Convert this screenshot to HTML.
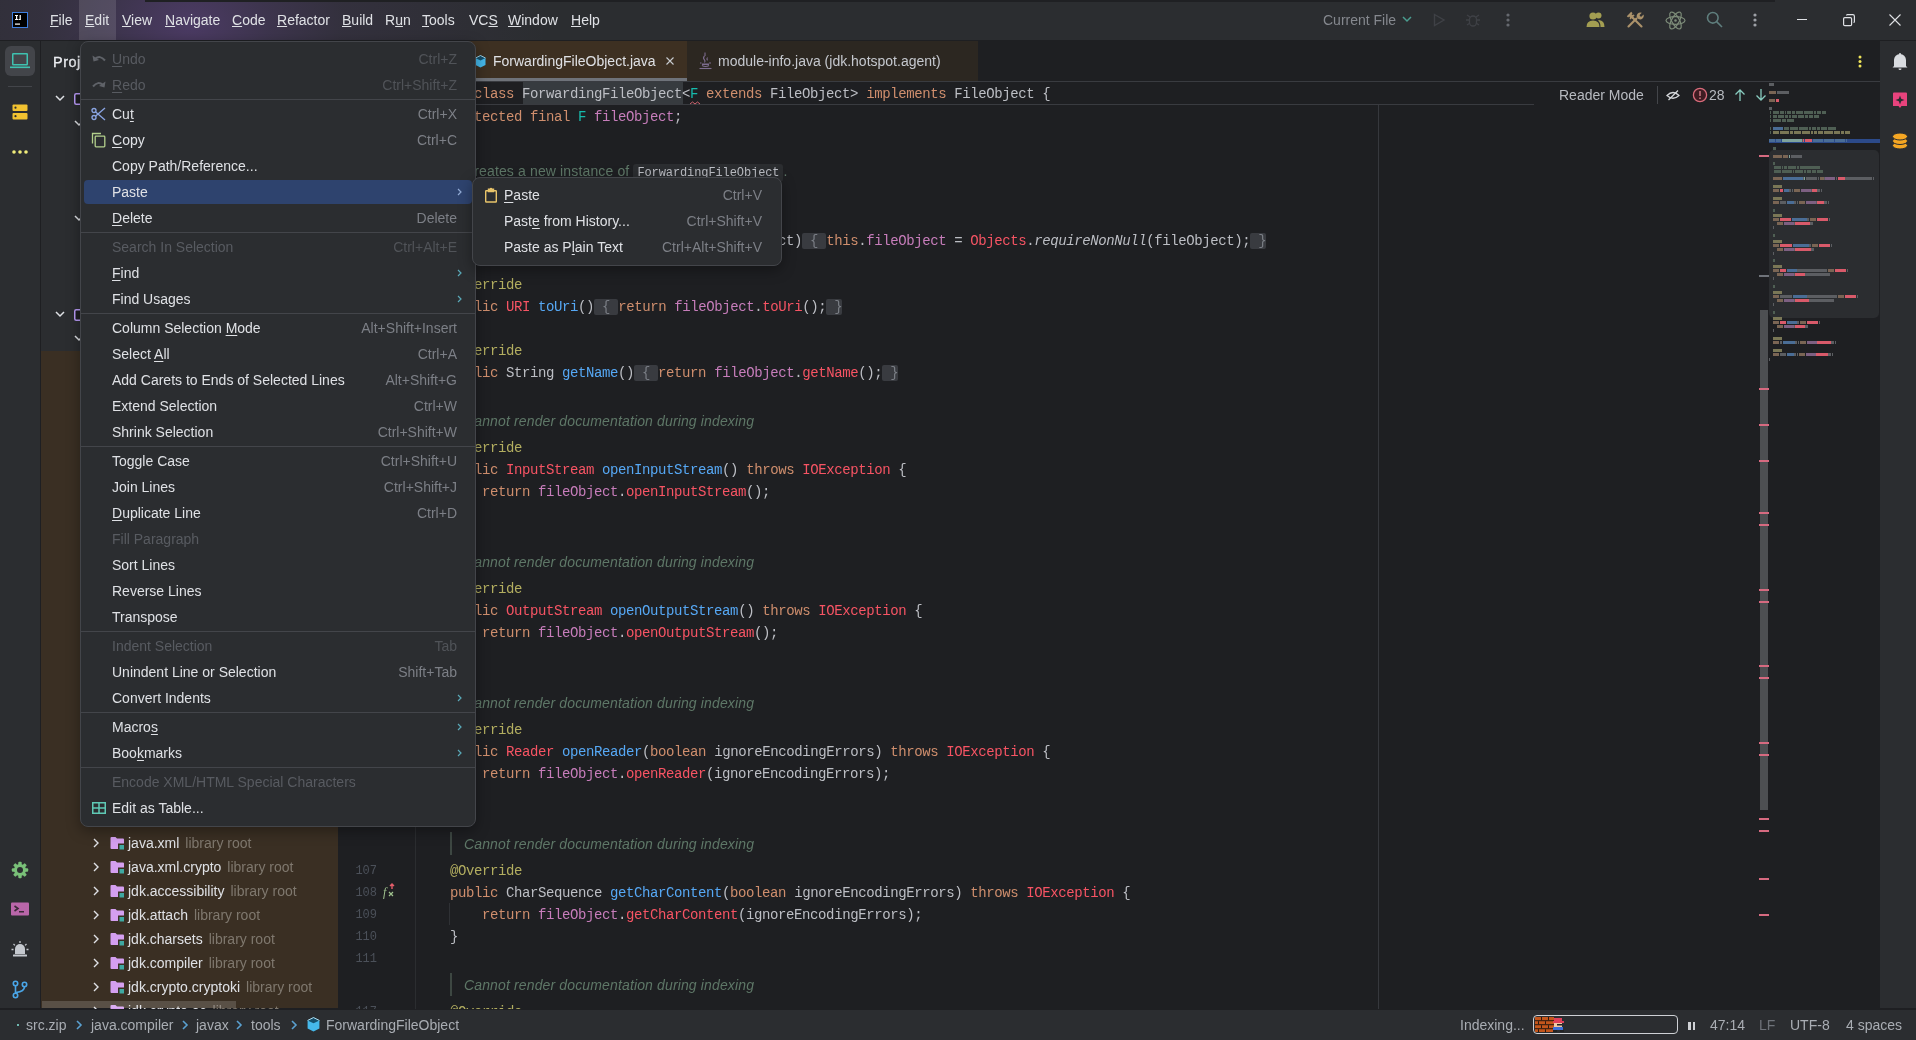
<!DOCTYPE html><html><head><meta charset="utf-8"><style>
*{margin:0;padding:0;box-sizing:border-box}
html,body{width:1916px;height:1040px;overflow:hidden;background:#1e1f22;font-family:"Liberation Sans",sans-serif;font-size:14px;color:#dfe1e5}
.a{position:absolute}
.mono{font-family:"Liberation Mono",monospace}
.u{text-decoration:underline;text-underline-offset:1px}

.code{position:absolute;left:418px;white-space:pre;font-family:"Liberation Mono",monospace;font-size:14px;letter-spacing:-0.4px;line-height:22px;color:#bcbec4}
.k{color:#cf8e6d}.an{color:#b3ae60}.md{color:#56a8f5}.er{color:#f75464}.fd{color:#c77dbb}.tp{color:#16baac}.it{font-style:italic}
.fo{background:#393b40;color:#7a7e85;border-radius:2px}
.doc{position:absolute;left:464px;white-space:pre;font-family:"Liberation Sans",sans-serif;font-style:italic;font-size:14px;letter-spacing:0.14px;line-height:18px;color:#5e7767}
.ln{position:absolute;left:348px;width:29px;text-align:right;font-family:"Liberation Mono",monospace;font-size:12px;line-height:16px;color:#4b5059}

.mi{position:absolute;white-space:pre;font-size:14px;line-height:26px;height:26px}
.ms{position:absolute;white-space:pre;font-size:14px;line-height:26px;height:26px;text-align:right;color:#7c7f86}
.u1{text-decoration:underline;text-decoration-thickness:1px;text-underline-offset:2px}
</style></head><body><div style="position:absolute;left:0;top:0;width:1916px;height:1040px;overflow:hidden;will-change:transform"><div class="a" style="left:0px;top:0px;width:1916px;height:40px;background:#2b2d30"></div>
<div class="a" style="left:0px;top:0px;width:1100px;height:40px;background:radial-gradient(ellipse 360px 260px at 190px 24px, rgba(150,90,220,0.30) 0%, rgba(150,90,220,0.17) 22%, rgba(150,90,220,0.08) 42%, rgba(150,90,220,0.03) 75%, rgba(150,90,220,0) 100%)"></div>
<div class="a" style="left:145px;top:0px;width:1630px;height:2px;background:#1f2023"></div>
<div class="a" style="left:0px;top:40px;width:1916px;height:1px;background:#1e1f22"></div>
<div class="a" style="left:0px;top:41px;width:40px;height:968px;background:#2b2d30"></div>
<div class="a" style="left:40px;top:41px;width:1px;height:968px;background:#1e1f22"></div>
<div class="a" style="left:41px;top:41px;width:297px;height:310px;background:#2b2d30"></div>
<div class="a" style="left:41px;top:351px;width:297px;height:658px;background:#3a2f23"></div>
<div class="a" style="left:338px;top:81px;width:1542px;height:928px;background:#1e1f22"></div>
<div class="a" style="left:1880px;top:41px;width:36px;height:968px;background:#2b2d30"></div>
<div class="a" style="left:1879px;top:41px;width:1px;height:968px;background:#1e1f22"></div>
<div class="a" style="left:0px;top:1009px;width:1916px;height:31px;background:#2b2d30"></div>
<div class="a" style="left:0px;top:1008px;width:1916px;height:1px;background:#1e1f22"></div>
<svg class="a" style="left:12px;top:12px" width="16" height="16" viewBox="0 0 16 16"><rect x="0.5" y="0.5" width="15" height="15" fill="#000" stroke="#3d7fe0" stroke-width="1"/><g fill="#fff"><rect x="3" y="3" width="3" height="1"/><rect x="4" y="3" width="1.2" height="5"/><rect x="3" y="7" width="3" height="1"/><rect x="7.6" y="3" width="1.2" height="4.5"/><rect x="6.5" y="7" width="2.3" height="1"/><rect x="3" y="11.5" width="5" height="1.2"/></g></svg>
<div class="a" style="left:79px;top:0px;width:37px;height:40px;background:rgba(255,255,255,0.12)"></div>
<div class="a" style="left:50px;top:12px;white-space:pre;font-size:14px;line-height:16px;color:#dfe1e5"><span class="u">F</span>ile</div>
<div class="a" style="left:85px;top:12px;white-space:pre;font-size:14px;line-height:16px;color:#dfe1e5"><span class="u">E</span>dit</div>
<div class="a" style="left:122px;top:12px;white-space:pre;font-size:14px;line-height:16px;color:#dfe1e5"><span class="u">V</span>iew</div>
<div class="a" style="left:165px;top:12px;white-space:pre;font-size:14px;line-height:16px;color:#dfe1e5"><span class="u">N</span>avigate</div>
<div class="a" style="left:232px;top:12px;white-space:pre;font-size:14px;line-height:16px;color:#dfe1e5"><span class="u">C</span>ode</div>
<div class="a" style="left:277px;top:12px;white-space:pre;font-size:14px;line-height:16px;color:#dfe1e5"><span class="u">R</span>efactor</div>
<div class="a" style="left:342px;top:12px;white-space:pre;font-size:14px;line-height:16px;color:#dfe1e5"><span class="u">B</span>uild</div>
<div class="a" style="left:385px;top:12px;white-space:pre;font-size:14px;line-height:16px;color:#dfe1e5">R<span class="u">u</span>n</div>
<div class="a" style="left:422px;top:12px;white-space:pre;font-size:14px;line-height:16px;color:#dfe1e5"><span class="u">T</span>ools</div>
<div class="a" style="left:469px;top:12px;white-space:pre;font-size:14px;line-height:16px;color:#dfe1e5">VC<span class="u">S</span></div>
<div class="a" style="left:508px;top:12px;white-space:pre;font-size:14px;line-height:16px;color:#dfe1e5"><span class="u">W</span>indow</div>
<div class="a" style="left:571px;top:12px;white-space:pre;font-size:14px;line-height:16px;color:#dfe1e5"><span class="u">H</span>elp</div>
<div class="a" style="left:5px;top:46px;width:30px;height:30px;background:#43454a;border-radius:6px"></div>
<svg class="a" style="left:10px;top:51px" width="20" height="20" viewBox="0 0 20 20"><rect x="2.75" y="2.75" width="14.5" height="11" rx="0.5" fill="none" stroke="#3fc1b0" stroke-width="1.5"/><rect x="0" y="15.5" width="20" height="1.6" fill="#3fc1b0"/></svg>
<div class="a" style="left:8px;top:86px;width:24px;height:1px;background:#43454a"></div>
<svg class="a" style="left:12px;top:104px" width="16" height="16" viewBox="0 0 16 16"><rect x="0.5" y="0.5" width="15" height="6.5" rx="1" fill="#f2c230"/><rect x="0.5" y="9" width="15" height="6.5" rx="1" fill="#f2c230"/><circle cx="3.5" cy="3.7" r="1.1" fill="#2b2d30"/><circle cx="3.5" cy="12.2" r="1.1" fill="#2b2d30"/></svg>
<svg class="a" style="left:11px;top:148px" width="18" height="8" viewBox="0 0 18 8"><circle cx="3" cy="4" r="1.8" fill="#f0ec7a"/><circle cx="9" cy="4" r="1.8" fill="#f0ec7a"/><circle cx="15" cy="4" r="1.8" fill="#f0ec7a"/></svg>
<svg class="a" style="left:11px;top:861px" width="18" height="18" viewBox="0 0 18 18"><g fill="#79c078"><circle cx="9" cy="9" r="6"/><rect x="7.3" y="0.8" width="3.4" height="16.4" rx="1"/><rect x="0.8" y="7.3" width="16.4" height="3.4" rx="1"/><rect x="7.3" y="0.8" width="3.4" height="16.4" rx="1" transform="rotate(45 9 9)"/><rect x="7.3" y="0.8" width="3.4" height="16.4" rx="1" transform="rotate(-45 9 9)"/></g><circle cx="9" cy="9" r="3" fill="#2b2d30"/></svg>
<svg class="a" style="left:10px;top:901px" width="20" height="16" viewBox="0 0 20 16"><rect x="1" y="1.5" width="18" height="13" rx="1" fill="#b966a9"/><path d="M4.5 5 L8 7.5 L4.5 10" stroke="#3a2a37" stroke-width="1.6" fill="none"/><rect x="9" y="10" width="5" height="1.5" fill="#3a2a37"/></svg>
<svg class="a" style="left:10px;top:940px" width="20" height="20" viewBox="0 0 20 20"><path d="M5 14 V9 A5 5 0 0 1 15 9 V14 Z" fill="#c4c8ce"/><rect x="3" y="14.5" width="14" height="2" rx="0.5" fill="#c4c8ce"/><path d="M10 1v2 M3.5 4l1.4 1.4 M16.5 4l-1.4 1.4 M1.5 9.5h2 M16.5 9.5h2" stroke="#c4c8ce" stroke-width="1.3"/></svg>
<svg class="a" style="left:10px;top:978px" width="20" height="22" viewBox="0 0 20 22"><g fill="none" stroke="#4aa6e8" stroke-width="1.6"><circle cx="5.5" cy="5.5" r="2.2"/><circle cx="14.5" cy="6.5" r="2.2"/><circle cx="5.5" cy="17.5" r="2.2"/><path d="M5.5 7.7 V15.3"/><path d="M14.5 8.7 Q14.5 13.5 6 14.5"/></g></svg>
<div class="a" style="left:53px;top:53px;white-space:pre;font-size:14.5px;letter-spacing:0.5px;line-height:18px;color:#eceef2;-webkit-text-stroke:0.3px #eceef2">Proj</div>
<svg class="a" style="left:55px;top:95px" width="10" height="7" viewBox="0 0 10 7"><path d="M1 1 L5 5 L9 1" fill="none" stroke="#dfe1e5" stroke-width="1.5"/></svg>
<svg class="a" style="left:74px;top:93px" width="12" height="12" viewBox="0 0 12 12"><rect x="0.75" y="0.75" width="10.5" height="10.5" rx="1.5" fill="#1e1f22" stroke="#b99bf8" stroke-width="1.5"/></svg>
<svg class="a" style="left:74px;top:120px" width="10" height="7" viewBox="0 0 10 7"><path d="M1 1 L5 5 L9 1" fill="none" stroke="#dfe1e5" stroke-width="1.5"/></svg>
<svg class="a" style="left:74px;top:215px" width="10" height="7" viewBox="0 0 10 7"><path d="M1 1 L5 5 L9 1" fill="none" stroke="#dfe1e5" stroke-width="1.5"/></svg>
<svg class="a" style="left:55px;top:311px" width="10" height="7" viewBox="0 0 10 7"><path d="M1 1 L5 5 L9 1" fill="none" stroke="#dfe1e5" stroke-width="1.5"/></svg>
<svg class="a" style="left:74px;top:309px" width="12" height="12" viewBox="0 0 12 12"><rect x="0.75" y="0.75" width="10.5" height="10.5" rx="1.5" fill="#1e1f22" stroke="#b99bf8" stroke-width="1.5"/></svg>
<svg class="a" style="left:74px;top:335px" width="10" height="7" viewBox="0 0 10 7"><path d="M1 1 L5 5 L9 1" fill="none" stroke="#dfe1e5" stroke-width="1.5"/></svg>
<svg class="a" style="left:93px;top:766px" width="7" height="10" viewBox="0 0 7 10"><path d="M1 1 L5 5 L1 9" fill="none" stroke="#dfe1e5" stroke-width="1.4"/></svg>
<svg class="a" style="left:110px;top:764px" width="15" height="14" viewBox="0 0 15 14"><path d="M0.5 2 Q0.5 1 1.5 1 H5.5 L7 2.5 H13 Q14 2.5 14 3.5 V12 Q14 13 13 13 H1.5 Q0.5 13 0.5 12 Z" fill="#d49ff0"/><rect x="8" y="7.5" width="6.5" height="6.5" fill="#3a2f23"/><rect x="9.5" y="9" width="4.5" height="4.5" fill="#3fa9a2"/></svg>
<div class="a" style="left:128px;top:762px;white-space:pre;font-size:14px;line-height:18px;color:#dfe1e5">java.sql<span style="color:#7f786e;margin-left:6px">library root</span></div>
<svg class="a" style="left:93px;top:790px" width="7" height="10" viewBox="0 0 7 10"><path d="M1 1 L5 5 L1 9" fill="none" stroke="#dfe1e5" stroke-width="1.4"/></svg>
<svg class="a" style="left:110px;top:788px" width="15" height="14" viewBox="0 0 15 14"><path d="M0.5 2 Q0.5 1 1.5 1 H5.5 L7 2.5 H13 Q14 2.5 14 3.5 V12 Q14 13 13 13 H1.5 Q0.5 13 0.5 12 Z" fill="#d49ff0"/><rect x="8" y="7.5" width="6.5" height="6.5" fill="#3a2f23"/><rect x="9.5" y="9" width="4.5" height="4.5" fill="#3fa9a2"/></svg>
<div class="a" style="left:128px;top:786px;white-space:pre;font-size:14px;line-height:18px;color:#dfe1e5">java.sql.rowset<span style="color:#7f786e;margin-left:6px">library root</span></div>
<svg class="a" style="left:93px;top:814px" width="7" height="10" viewBox="0 0 7 10"><path d="M1 1 L5 5 L1 9" fill="none" stroke="#dfe1e5" stroke-width="1.4"/></svg>
<svg class="a" style="left:110px;top:812px" width="15" height="14" viewBox="0 0 15 14"><path d="M0.5 2 Q0.5 1 1.5 1 H5.5 L7 2.5 H13 Q14 2.5 14 3.5 V12 Q14 13 13 13 H1.5 Q0.5 13 0.5 12 Z" fill="#d49ff0"/><rect x="8" y="7.5" width="6.5" height="6.5" fill="#3a2f23"/><rect x="9.5" y="9" width="4.5" height="4.5" fill="#3fa9a2"/></svg>
<div class="a" style="left:128px;top:810px;white-space:pre;font-size:14px;line-height:18px;color:#dfe1e5">java.transaction.xa<span style="color:#7f786e;margin-left:6px">library root</span></div>
<svg class="a" style="left:93px;top:838px" width="7" height="10" viewBox="0 0 7 10"><path d="M1 1 L5 5 L1 9" fill="none" stroke="#dfe1e5" stroke-width="1.4"/></svg>
<svg class="a" style="left:110px;top:836px" width="15" height="14" viewBox="0 0 15 14"><path d="M0.5 2 Q0.5 1 1.5 1 H5.5 L7 2.5 H13 Q14 2.5 14 3.5 V12 Q14 13 13 13 H1.5 Q0.5 13 0.5 12 Z" fill="#d49ff0"/><rect x="8" y="7.5" width="6.5" height="6.5" fill="#3a2f23"/><rect x="9.5" y="9" width="4.5" height="4.5" fill="#3fa9a2"/></svg>
<div class="a" style="left:128px;top:834px;white-space:pre;font-size:14px;line-height:18px;color:#dfe1e5">java.xml<span style="color:#7f786e;margin-left:6px">library root</span></div>
<svg class="a" style="left:93px;top:862px" width="7" height="10" viewBox="0 0 7 10"><path d="M1 1 L5 5 L1 9" fill="none" stroke="#dfe1e5" stroke-width="1.4"/></svg>
<svg class="a" style="left:110px;top:860px" width="15" height="14" viewBox="0 0 15 14"><path d="M0.5 2 Q0.5 1 1.5 1 H5.5 L7 2.5 H13 Q14 2.5 14 3.5 V12 Q14 13 13 13 H1.5 Q0.5 13 0.5 12 Z" fill="#d49ff0"/><rect x="8" y="7.5" width="6.5" height="6.5" fill="#3a2f23"/><rect x="9.5" y="9" width="4.5" height="4.5" fill="#3fa9a2"/></svg>
<div class="a" style="left:128px;top:858px;white-space:pre;font-size:14px;line-height:18px;color:#dfe1e5">java.xml.crypto<span style="color:#7f786e;margin-left:6px">library root</span></div>
<svg class="a" style="left:93px;top:886px" width="7" height="10" viewBox="0 0 7 10"><path d="M1 1 L5 5 L1 9" fill="none" stroke="#dfe1e5" stroke-width="1.4"/></svg>
<svg class="a" style="left:110px;top:884px" width="15" height="14" viewBox="0 0 15 14"><path d="M0.5 2 Q0.5 1 1.5 1 H5.5 L7 2.5 H13 Q14 2.5 14 3.5 V12 Q14 13 13 13 H1.5 Q0.5 13 0.5 12 Z" fill="#d49ff0"/><rect x="8" y="7.5" width="6.5" height="6.5" fill="#3a2f23"/><rect x="9.5" y="9" width="4.5" height="4.5" fill="#3fa9a2"/></svg>
<div class="a" style="left:128px;top:882px;white-space:pre;font-size:14px;line-height:18px;color:#dfe1e5">jdk.accessibility<span style="color:#7f786e;margin-left:6px">library root</span></div>
<svg class="a" style="left:93px;top:910px" width="7" height="10" viewBox="0 0 7 10"><path d="M1 1 L5 5 L1 9" fill="none" stroke="#dfe1e5" stroke-width="1.4"/></svg>
<svg class="a" style="left:110px;top:908px" width="15" height="14" viewBox="0 0 15 14"><path d="M0.5 2 Q0.5 1 1.5 1 H5.5 L7 2.5 H13 Q14 2.5 14 3.5 V12 Q14 13 13 13 H1.5 Q0.5 13 0.5 12 Z" fill="#d49ff0"/><rect x="8" y="7.5" width="6.5" height="6.5" fill="#3a2f23"/><rect x="9.5" y="9" width="4.5" height="4.5" fill="#3fa9a2"/></svg>
<div class="a" style="left:128px;top:906px;white-space:pre;font-size:14px;line-height:18px;color:#dfe1e5">jdk.attach<span style="color:#7f786e;margin-left:6px">library root</span></div>
<svg class="a" style="left:93px;top:934px" width="7" height="10" viewBox="0 0 7 10"><path d="M1 1 L5 5 L1 9" fill="none" stroke="#dfe1e5" stroke-width="1.4"/></svg>
<svg class="a" style="left:110px;top:932px" width="15" height="14" viewBox="0 0 15 14"><path d="M0.5 2 Q0.5 1 1.5 1 H5.5 L7 2.5 H13 Q14 2.5 14 3.5 V12 Q14 13 13 13 H1.5 Q0.5 13 0.5 12 Z" fill="#d49ff0"/><rect x="8" y="7.5" width="6.5" height="6.5" fill="#3a2f23"/><rect x="9.5" y="9" width="4.5" height="4.5" fill="#3fa9a2"/></svg>
<div class="a" style="left:128px;top:930px;white-space:pre;font-size:14px;line-height:18px;color:#dfe1e5">jdk.charsets<span style="color:#7f786e;margin-left:6px">library root</span></div>
<svg class="a" style="left:93px;top:958px" width="7" height="10" viewBox="0 0 7 10"><path d="M1 1 L5 5 L1 9" fill="none" stroke="#dfe1e5" stroke-width="1.4"/></svg>
<svg class="a" style="left:110px;top:956px" width="15" height="14" viewBox="0 0 15 14"><path d="M0.5 2 Q0.5 1 1.5 1 H5.5 L7 2.5 H13 Q14 2.5 14 3.5 V12 Q14 13 13 13 H1.5 Q0.5 13 0.5 12 Z" fill="#d49ff0"/><rect x="8" y="7.5" width="6.5" height="6.5" fill="#3a2f23"/><rect x="9.5" y="9" width="4.5" height="4.5" fill="#3fa9a2"/></svg>
<div class="a" style="left:128px;top:954px;white-space:pre;font-size:14px;line-height:18px;color:#dfe1e5">jdk.compiler<span style="color:#7f786e;margin-left:6px">library root</span></div>
<svg class="a" style="left:93px;top:982px" width="7" height="10" viewBox="0 0 7 10"><path d="M1 1 L5 5 L1 9" fill="none" stroke="#dfe1e5" stroke-width="1.4"/></svg>
<svg class="a" style="left:110px;top:980px" width="15" height="14" viewBox="0 0 15 14"><path d="M0.5 2 Q0.5 1 1.5 1 H5.5 L7 2.5 H13 Q14 2.5 14 3.5 V12 Q14 13 13 13 H1.5 Q0.5 13 0.5 12 Z" fill="#d49ff0"/><rect x="8" y="7.5" width="6.5" height="6.5" fill="#3a2f23"/><rect x="9.5" y="9" width="4.5" height="4.5" fill="#3fa9a2"/></svg>
<div class="a" style="left:128px;top:978px;white-space:pre;font-size:14px;line-height:18px;color:#dfe1e5">jdk.crypto.cryptoki<span style="color:#7f786e;margin-left:6px">library root</span></div>
<svg class="a" style="left:93px;top:1006px" width="7" height="10" viewBox="0 0 7 10"><path d="M1 1 L5 5 L1 9" fill="none" stroke="#dfe1e5" stroke-width="1.4"/></svg>
<svg class="a" style="left:110px;top:1004px" width="15" height="14" viewBox="0 0 15 14"><path d="M0.5 2 Q0.5 1 1.5 1 H5.5 L7 2.5 H13 Q14 2.5 14 3.5 V12 Q14 13 13 13 H1.5 Q0.5 13 0.5 12 Z" fill="#d49ff0"/><rect x="8" y="7.5" width="6.5" height="6.5" fill="#3a2f23"/><rect x="9.5" y="9" width="4.5" height="4.5" fill="#3fa9a2"/></svg>
<div class="a" style="left:128px;top:1002px;white-space:pre;font-size:14px;line-height:18px;color:#dfe1e5">jdk.crypto.ec<span style="color:#7f786e;margin-left:6px">library root</span></div>
<div class="a" style="left:42px;top:1001px;width:194px;height:7px;background:rgba(255,255,255,0.16)"></div>
<div class="a" style="left:1378px;top:104px;width:1px;height:905px;background:#36383d"></div>
<div class="a" style="left:415px;top:81px;width:1px;height:928px;background:#2b2d30"></div>
<div class="code" style="top:106px">    <span class="k">protected final</span> <span class="tp">F</span> <span class="fd">fileObject</span>;</div>
<div class="a" style="left:450px;top:150px;width:2px;height:60px;background:#3d4742"></div>
<div class="doc" style="top:162px;font-style:normal">Creates a new instance of <span style="font-family:'Liberation Mono',monospace;font-size:12px;letter-spacing:-0.1px;background:#2b2d30;color:#bcbec4;padding:2px 4px;border-radius:3px">ForwardingFileObject</span>.</div>
<div class="code" style="top:230px">    <span class="k">protected</span> ForwardingFileObject(<span class="tp">F</span> fileObject)<span class="fo"> { </span><span class="k">this</span>.<span class="fd">fileObject</span> = <span class="er">Objects</span>.<span class="it">requireNonNull</span>(fileObject);<span class="fo"> }</span></div>
<div class="code" style="top:274px">    <span class="an">@Override</span></div>
<div class="code" style="top:296px">    <span class="k">public</span> <span class="er">URI</span> <span class="md">toUri</span>()<span class="fo"> { </span><span class="k">return</span> <span class="fd">fileObject</span>.<span class="er">toUri</span>();<span class="fo"> }</span></div>
<div class="code" style="top:340px">    <span class="an">@Override</span></div>
<div class="code" style="top:362px">    <span class="k">public</span> String <span class="md">getName</span>()<span class="fo"> { </span><span class="k">return</span> <span class="fd">fileObject</span>.<span class="er">getName</span>();<span class="fo"> }</span></div>
<div class="a" style="left:450px;top:409px;width:2px;height:23px;background:#3d4742"></div>
<div class="doc" style="top:412px">Cannot render documentation during indexing</div>
<div class="code" style="top:437px">    <span class="an">@Override</span></div>
<div class="code" style="top:459px">    <span class="k">public</span> <span class="er">InputStream</span> <span class="md">openInputStream</span>() <span class="k">throws</span> <span class="er">IOException</span> {</div>
<div class="code" style="top:481px">        <span class="k">return</span> <span class="fd">fileObject</span>.<span class="er">openInputStream</span>();</div>
<div class="code" style="top:503px">    }</div>
<div class="a" style="left:450px;top:550px;width:2px;height:23px;background:#3d4742"></div>
<div class="doc" style="top:553px">Cannot render documentation during indexing</div>
<div class="code" style="top:578px">    <span class="an">@Override</span></div>
<div class="code" style="top:600px">    <span class="k">public</span> <span class="er">OutputStream</span> <span class="md">openOutputStream</span>() <span class="k">throws</span> <span class="er">IOException</span> {</div>
<div class="code" style="top:622px">        <span class="k">return</span> <span class="fd">fileObject</span>.<span class="er">openOutputStream</span>();</div>
<div class="code" style="top:644px">    }</div>
<div class="a" style="left:450px;top:691px;width:2px;height:23px;background:#3d4742"></div>
<div class="doc" style="top:694px">Cannot render documentation during indexing</div>
<div class="code" style="top:719px">    <span class="an">@Override</span></div>
<div class="code" style="top:741px">    <span class="k">public</span> <span class="er">Reader</span> <span class="md">openReader</span>(<span class="k">boolean</span> ignoreEncodingErrors) <span class="k">throws</span> <span class="er">IOException</span> {</div>
<div class="code" style="top:763px">        <span class="k">return</span> <span class="fd">fileObject</span>.<span class="er">openReader</span>(ignoreEncodingErrors);</div>
<div class="code" style="top:785px">    }</div>
<div class="a" style="left:450px;top:832px;width:2px;height:23px;background:#3d4742"></div>
<div class="doc" style="top:835px">Cannot render documentation during indexing</div>
<div class="code" style="top:860px">    <span class="an">@Override</span></div>
<div class="code" style="top:882px">    <span class="k">public</span> CharSequence <span class="md">getCharContent</span>(<span class="k">boolean</span> ignoreEncodingErrors) <span class="k">throws</span> <span class="er">IOException</span> {</div>
<div class="code" style="top:904px">        <span class="k">return</span> <span class="fd">fileObject</span>.<span class="er">getCharContent</span>(ignoreEncodingErrors);</div>
<div class="code" style="top:926px">    }</div>
<div class="a" style="left:450px;top:973px;width:2px;height:23px;background:#3d4742"></div>
<div class="doc" style="top:976px">Cannot render documentation during indexing</div>
<div class="code" style="top:1001px">    <span class="an">@Override</span></div>
<div class="ln" style="top:863px">107</div>
<div class="ln" style="top:885px">108</div>
<div class="ln" style="top:907px">109</div>
<div class="ln" style="top:929px">110</div>
<div class="ln" style="top:951px">111</div>
<div class="ln" style="top:1004px">117</div>
<svg class="a" style="left:382px;top:883px" width="16" height="16" viewBox="0 0 16 16"><text x="1" y="13" font-family="Liberation Serif" font-style="italic" font-size="12" fill="#9fc28e">f</text><path d="M7 13 L11 9 M7 9 L11 13" stroke="#9fc28e" stroke-width="1.2"/><path d="M10 6 L10 1 M8 3 L10 1 L12 3" stroke="#e35d6a" stroke-width="1.4" fill="none"/></svg>
<div class="a" style="left:449px;top:903px;width:1px;height:22px;background:#2f3135"></div>
<div class="a" style="left:338px;top:41px;width:1542px;height:40px;background:#1e1f22"></div>
<div class="a" style="left:338px;top:81px;width:1542px;height:1px;background:#393b40"></div>
<div class="a" style="left:338px;top:41px;width:349px;height:40px;background:#3d3022"></div>
<div class="a" style="left:338px;top:78px;width:349px;height:3px;background:#6f737a"></div>
<div class="a" style="left:687px;top:41px;width:291px;height:40px;background:#2c2721"></div>
<svg class="a" style="left:475px;top:55px" width="11" height="13" viewBox="0 0 11 13" preserveAspectRatio="none"><path d="M5.5 0.5 L10.5 3 V10 L5.5 12.5 L0.5 10 V3 Z" fill="#45b8ea"/><path d="M5.5 0.5 L10.5 3 L5.5 5.5 L0.5 3 Z" fill="#15506c"/><path d="M0.5 3 L5.5 0.5 L10.5 3" fill="none" stroke="#b9e6f7" stroke-width="0.8"/></svg>
<div class="a" style="left:493px;top:52px;white-space:pre;font-size:14px;line-height:18px;color:#dfe1e5">ForwardingFileObject.java</div>
<svg class="a" style="left:666px;top:57px" width="8" height="8" viewBox="0 0 8 8"><path d="M0.5 0.5 L7.5 7.5 M7.5 0.5 L0.5 7.5" stroke="#c9ccd0" stroke-width="1.1"/></svg>
<svg class="a" style="left:698px;top:52px" width="15" height="18" viewBox="0 0 15 18"><g fill="none" stroke="#7d6c8e" stroke-width="1.1"><path d="M7 0.5 V4"/><path d="M6.5 4 Q4.5 6 6.5 8 Q7.5 9 6.5 10.5"/><path d="M9.5 5.5 Q8.3 7 9.5 8.3"/><path d="M4 13.5 Q7.5 15.5 11 13.5"/><path d="M2 11 H3.5 M11 11 H13"/><path d="M1.5 16.5 H13.5"/></g><rect x="4" y="11.5" width="7" height="1.5" fill="#7d6c8e"/></svg>
<div class="a" style="left:718px;top:52px;white-space:pre;font-size:14px;line-height:18px;color:#c5c8ce">module-info.java (jdk.hotspot.agent)</div>
<svg class="a" style="left:1857px;top:55px" width="6" height="13" viewBox="0 0 6 13"><circle cx="3" cy="2" r="1.5" fill="#f0e55a"/><circle cx="3" cy="6.5" r="1.5" fill="#f0e55a"/><circle cx="3" cy="11" r="1.5" fill="#f0e55a"/></svg>
<div class="a" style="left:338px;top:82px;width:1431px;height:22px;background:#1e1f22"></div>
<div class="a" style="left:338px;top:104px;width:1196px;height:1px;background:#393b40"></div>
<div class="a" style="left:523px;top:82px;width:160px;height:22px;background:#373b3f"></div>
<div class="code" style="top:83px"><span class="k">public class</span> ForwardingFileObject&lt;<span class="tp">F</span> <span class="k">extends</span> FileObject&gt; <span class="k">implements</span> FileObject {</div>
<svg class="a" style="left:690px;top:101px" width="10" height="4" viewBox="0 0 10 4"><path d="M0 3 L2.5 1 L5 3 L7.5 1 L10 3" fill="none" stroke="#d1646f" stroke-width="1"/></svg>
<div class="a" style="left:1559px;top:86px;white-space:pre;font-size:14px;line-height:18px;color:#b7bac0">Reader Mode</div>
<div class="a" style="left:1657px;top:86px;width:1px;height:18px;background:#43454a"></div>
<svg class="a" style="left:1666px;top:89px" width="14" height="12" viewBox="0 0 14 12"><g fill="none" stroke="#d5d7db" stroke-width="1.3"><path d="M1 6.5 Q7 0.5 13 6.5 Q7 12 1 6.5 Z"/><path d="M2.5 11 L12 1.5"/></g></svg>
<svg class="a" style="left:1692px;top:87px" width="16" height="16" viewBox="0 0 16 16"><circle cx="8" cy="8" r="6.6" fill="#3f1c22" stroke="#d96b7b" stroke-width="1.3"/><rect x="7.3" y="4" width="1.4" height="5" fill="#d97f8a"/><rect x="7.3" y="10.5" width="1.4" height="1.5" fill="#d97f8a"/></svg>
<div class="a" style="left:1709px;top:86px;white-space:pre;font-size:14px;line-height:18px;color:#b7bac0">28</div>
<svg class="a" style="left:1734px;top:88px" width="12" height="14" viewBox="0 0 12 14"><path d="M6 13 V2 M1.5 6.5 L6 2 L10.5 6.5" fill="none" stroke="#88cbbf" stroke-width="1.3"/></svg>
<svg class="a" style="left:1755px;top:88px" width="12" height="14" viewBox="0 0 12 14"><path d="M6 1 V12 M1.5 7.5 L6 12 L10.5 7.5" fill="none" stroke="#88cbbf" stroke-width="1.3"/></svg>
<div class="a" style="left:1760px;top:310px;width:8px;height:500px;background:#4d4f52"></div>
<div class="a" style="left:1759px;top:154.5px;width:10px;height:2.5px;background:#d66a80"></div>
<div class="a" style="left:1759px;top:387.5px;width:10px;height:2.5px;background:#d66a80"></div>
<div class="a" style="left:1759px;top:423.5px;width:10px;height:2.5px;background:#d66a80"></div>
<div class="a" style="left:1759px;top:459.5px;width:10px;height:2.5px;background:#d66a80"></div>
<div class="a" style="left:1759px;top:511.5px;width:10px;height:2.5px;background:#d66a80"></div>
<div class="a" style="left:1759px;top:523.5px;width:10px;height:2.5px;background:#d66a80"></div>
<div class="a" style="left:1759px;top:588.5px;width:10px;height:2.5px;background:#d66a80"></div>
<div class="a" style="left:1759px;top:600.5px;width:10px;height:2.5px;background:#d66a80"></div>
<div class="a" style="left:1759px;top:664.5px;width:10px;height:2.5px;background:#d66a80"></div>
<div class="a" style="left:1759px;top:676.5px;width:10px;height:2.5px;background:#d66a80"></div>
<div class="a" style="left:1759px;top:741.5px;width:10px;height:2.5px;background:#d66a80"></div>
<div class="a" style="left:1759px;top:753.5px;width:10px;height:2.5px;background:#d66a80"></div>
<div class="a" style="left:1759px;top:817.5px;width:10px;height:2.5px;background:#d66a80"></div>
<div class="a" style="left:1759px;top:829.5px;width:10px;height:2.5px;background:#d66a80"></div>
<div class="a" style="left:1759px;top:877.5px;width:10px;height:2.5px;background:#d66a80"></div>
<div class="a" style="left:1759px;top:913.5px;width:10px;height:2.5px;background:#d66a80"></div>
<div class="a" style="left:1759px;top:275px;width:10px;height:2px;background:#6f737a"></div>
<svg class="a" style="left:1891px;top:52px" width="18" height="19" viewBox="0 0 18 19"><path d="M3 14 V8 A6 6 0 0 1 15 8 V14 L16.5 15.5 H1.5 Z" fill="#d9dce0"/><path d="M7.5 16.5 A1.5 1.5 0 0 0 10.5 16.5 Z" fill="#d9dce0"/><rect x="8" y="1" width="2" height="2" rx="1" fill="#d9dce0"/></svg>
<svg class="a" style="left:1892px;top:92px" width="16" height="18" viewBox="0 0 16 18"><path d="M1 1.5 Q1 0.5 2 0.5 H14 Q15 0.5 15 1.5 V14 H9.5 L8 16 L6.5 14 H1 Z" fill="#e8437d"/><path d="M8 3.5 L9.2 6.8 L12.5 8 L9.2 9.2 L8 12.5 L6.8 9.2 L3.5 8 L6.8 6.8 Z" fill="#2b2d30"/></svg>
<svg class="a" style="left:1891px;top:132px" width="18" height="18" viewBox="0 0 18 18"><g fill="#f5a623" stroke="#2b2d30" stroke-width="1"><ellipse cx="9" cy="13.5" rx="7.5" ry="3.5"/><ellipse cx="9" cy="9" rx="7.5" ry="3.5"/><ellipse cx="9" cy="4.5" rx="7.5" ry="3.5"/></g></svg>
<div class="a" style="left:1323px;top:12px;white-space:pre;font-size:14px;line-height:16px;color:#85888e">Current File</div>
<svg class="a" style="left:1402px;top:16px" width="10" height="7" viewBox="0 0 10 7"><path d="M1 1 L5 5 L9 1" fill="none" stroke="#4a9c8f" stroke-width="1.5"/></svg>
<svg class="a" style="left:1432px;top:13px" width="14" height="14" viewBox="0 0 14 14"><path d="M2.5 1.5 L12 7 L2.5 12.5 Z" fill="none" stroke="#3f4146" stroke-width="1.4"/></svg>
<svg class="a" style="left:1465px;top:12px" width="16" height="16" viewBox="0 0 16 16"><g fill="none" stroke="#3f4146" stroke-width="1.3"><rect x="4.5" y="4" width="7" height="10" rx="3.5"/><path d="M1 8 H4.5 M11.5 8 H15 M2 3 L5 5 M14 3 L11 5 M2 13 L5 11 M14 13 L11 11"/></g></svg>
<svg class="a" style="left:1505px;top:13px" width="6" height="14" viewBox="0 0 6 14"><circle cx="3" cy="2" r="1.6" fill="#66696f"/><circle cx="3" cy="7" r="1.6" fill="#66696f"/><circle cx="3" cy="12" r="1.6" fill="#66696f"/></svg>
<svg class="a" style="left:1586px;top:11px" width="19" height="17" viewBox="0 0 19 17"><g fill="#a39e52"><circle cx="7" cy="5" r="3.6"/><path d="M0.5 16 Q0.5 9.5 7 9.5 Q13.5 9.5 13.5 16 Z"/><circle cx="12.5" cy="4.5" r="3"/><path d="M13 9 Q18.5 9.5 18.5 16 H14.5 Q14.5 11 12 9.8 Z"/></g></svg>
<svg class="a" style="left:1626px;top:11px" width="18" height="18" viewBox="0 0 18 18"><g stroke="#ab926a" stroke-width="2.1" fill="none" stroke-linecap="round"><path d="M6.5 6.5 L15.5 15.5"/><path d="M2.5 15.5 L10.5 7.5"/></g><path d="M0.8 5.2 L5.2 0.8 L6.6 2.2 L5.6 3.2 L6.4 4 L7.8 3.6 L8.6 4.4 L4.4 8.6 L3.6 7.8 L4 6.4 L3.2 5.6 L2.2 6.6 Z" fill="#ab926a"/><path d="M11 6.5 A3.6 3.6 0 0 1 15.8 1.8 L13.6 4 L14 5.3 L15.3 5.7 L17.5 3.5 A3.6 3.6 0 0 1 12.5 8 Z" fill="#ab926a"/></svg>
<svg class="a" style="left:1665px;top:10px" width="21" height="21" viewBox="0 0 21 21"><g fill="none" stroke="#7d8c79" stroke-width="1.2"><ellipse cx="10.5" cy="10.5" rx="9.5" ry="3.8"/><ellipse cx="10.5" cy="10.5" rx="9.5" ry="3.8" transform="rotate(60 10.5 10.5)"/><ellipse cx="10.5" cy="10.5" rx="9.5" ry="3.8" transform="rotate(-60 10.5 10.5)"/></g><circle cx="10.5" cy="10.5" r="1.3" fill="#7d8c79"/></svg>
<svg class="a" style="left:1706px;top:11px" width="17" height="17" viewBox="0 0 17 17"><g fill="none" stroke="#5f7e7d" stroke-width="1.6"><circle cx="6.8" cy="6.8" r="5.3"/><path d="M10.6 10.6 L16 16"/></g></svg>
<svg class="a" style="left:1752px;top:13px" width="6" height="14" viewBox="0 0 6 14"><circle cx="3" cy="2" r="1.6" fill="#9da0a6"/><circle cx="3" cy="7" r="1.6" fill="#9da0a6"/><circle cx="3" cy="12" r="1.6" fill="#9da0a6"/></svg>
<div class="a" style="left:1797px;top:19px;width:10px;height:1.2px;background:#dfe1e5"></div>
<svg class="a" style="left:1842px;top:13px" width="14" height="14" viewBox="0 0 14 14"><g fill="none" stroke="#dfe1e5" stroke-width="1.2"><rect x="1.6" y="4.6" width="8" height="8" rx="1.2"/><path d="M4.5 2.5 Q4.5 1.6 5.4 1.6 H10.8 Q12.4 1.6 12.4 3.2 V8.6 Q12.4 9.5 11.5 9.5"/></g></svg>
<svg class="a" style="left:1889px;top:14px" width="12" height="12" viewBox="0 0 12 12"><path d="M0.5 0.5 L11.5 11.5 M11.5 0.5 L0.5 11.5" stroke="#dfe1e5" stroke-width="1.1"/></svg>
<div class="a" style="left:0px;top:1009px;width:1916px;height:1px;background:#1e1f22"></div>
<div class="a" style="left:0px;top:1010px;width:1916px;height:30px;background:#2b2d30"></div>
<div class="a" style="left:17px;top:1024px;width:2px;height:2px;background:#6fb8b0"></div>
<div class="a" style="left:26px;top:1016px;white-space:pre;font-size:14px;line-height:18px;color:#a9adb3">src.zip</div>
<div class="a" style="left:91px;top:1016px;white-space:pre;font-size:14px;line-height:18px;color:#a9adb3">java.compiler</div>
<div class="a" style="left:196px;top:1016px;white-space:pre;font-size:14px;line-height:18px;color:#a9adb3">javax</div>
<div class="a" style="left:251px;top:1016px;white-space:pre;font-size:14px;line-height:18px;color:#a9adb3">tools</div>
<svg class="a" style="left:76px;top:1020px" width="7" height="10" viewBox="0 0 7 10"><path d="M1 1 L5 5 L1 9" fill="none" stroke="#5aa0d0" stroke-width="1.6"/></svg>
<svg class="a" style="left:182px;top:1020px" width="7" height="10" viewBox="0 0 7 10"><path d="M1 1 L5 5 L1 9" fill="none" stroke="#5aa0d0" stroke-width="1.6"/></svg>
<svg class="a" style="left:236px;top:1020px" width="7" height="10" viewBox="0 0 7 10"><path d="M1 1 L5 5 L1 9" fill="none" stroke="#5aa0d0" stroke-width="1.6"/></svg>
<svg class="a" style="left:291px;top:1020px" width="7" height="10" viewBox="0 0 7 10"><path d="M1 1 L5 5 L1 9" fill="none" stroke="#5aa0d0" stroke-width="1.6"/></svg>
<svg class="a" style="left:307px;top:1017px" width="13" height="15" viewBox="0 0 11 13" preserveAspectRatio="none"><path d="M5.5 0.5 L10.5 3 V10 L5.5 12.5 L0.5 10 V3 Z" fill="#45b8ea"/><path d="M5.5 0.5 L10.5 3 L5.5 5.5 L0.5 3 Z" fill="#15506c"/><path d="M0.5 3 L5.5 0.5 L10.5 3" fill="none" stroke="#b9e6f7" stroke-width="0.8"/></svg>
<div class="a" style="left:326px;top:1016px;white-space:pre;font-size:14px;line-height:18px;color:#a9adb3">ForwardingFileObject</div>
<div class="a" style="left:1460px;top:1016px;white-space:pre;font-size:14px;line-height:18px;color:#a9adb3">Indexing...</div>
<div class="a" style="left:1533px;top:1015px;width:145px;height:19px;background:#2b2d30;border:1.5px solid #cfd1d5;border-radius:4px"></div>
<svg class="a" style="left:1535px;top:1017px" width="34" height="16" viewBox="0 0 34 16"><rect x="0" y="0" width="19" height="15" fill="#c4561c"/><g fill="#2b1a10"><rect x="0" y="3.2" width="19" height="1"/><rect x="0" y="7.2" width="19" height="1"/><rect x="0" y="11.2" width="19" height="1"/><rect x="6" y="0" width="1" height="3.2"/><rect x="13" y="0" width="1" height="3.2"/><rect x="3" y="4.2" width="1" height="3"/><rect x="10" y="4.2" width="1" height="3"/><rect x="6" y="8.2" width="1" height="3"/><rect x="13" y="8.2" width="1" height="3"/><rect x="3" y="12.2" width="1" height="3"/><rect x="10" y="12.2" width="1" height="3"/></g><rect x="19" y="1" width="8" height="3" fill="#e0405a"/><rect x="18" y="4" width="11" height="2" fill="#e0405a"/><rect x="19" y="6" width="8" height="4" fill="#f2c9a8"/><rect x="22" y="7" width="5" height="1.5" fill="#222"/><rect x="18" y="10" width="10" height="3" fill="#3d6fd8"/><rect x="18" y="13" width="4" height="2" fill="#222"/><rect x="25" y="13" width="4" height="2" fill="#222"/></svg>
<div class="a" style="left:1688px;top:1022px;width:2.5px;height:8px;background:#cfd1d5"></div>
<div class="a" style="left:1692.5px;top:1022px;width:2.5px;height:8px;background:#cfd1d5"></div>
<div class="a" style="left:1710px;top:1016px;white-space:pre;font-size:14px;line-height:18px;color:#a9adb3">47:14</div>
<div class="a" style="left:1759px;top:1016px;white-space:pre;font-size:14px;line-height:18px;color:#6f737a">LF</div>
<div class="a" style="left:1790px;top:1016px;white-space:pre;font-size:14px;line-height:18px;color:#a9adb3">UTF-8</div>
<div class="a" style="left:1846px;top:1016px;white-space:pre;font-size:14px;line-height:18px;color:#a9adb3">4 spaces</div>
<div class="a" style="left:1769px;top:150px;width:110px;height:168px;background:#2b2d30;border-radius:5px"></div>
<div class="a" style="left:1769px;top:139px;width:111px;height:4px;background:#2c4a8a"></div>
<div class="a" style="left:1769px;top:83px;width:5px;height:2.5px;background:#5c5e62"></div>
<div class="a" style="left:1769px;top:91px;width:7px;height:2.5px;background:#7a6554"></div>
<div class="a" style="left:1777px;top:91px;width:12px;height:2.5px;background:#5c5e62"></div>
<div class="a" style="left:1769px;top:99px;width:6px;height:2.5px;background:#7a6554"></div>
<div class="a" style="left:1776px;top:99px;width:3px;height:2.5px;background:#d95a6a"></div>
<div class="a" style="left:1769px;top:107px;width:3px;height:2.5px;background:#5c5e62"></div>
<div class="a" style="left:1770px;top:111px;width:1px;height:2.5px;background:#4f5f54"></div>
<div class="a" style="left:1773px;top:111px;width:6px;height:2.5px;background:#4f5f54"></div>
<div class="a" style="left:1780px;top:111px;width:4px;height:2.5px;background:#4f5f54"></div>
<div class="a" style="left:1785px;top:111px;width:1px;height:2.5px;background:#4f5f54"></div>
<div class="a" style="left:1787px;top:111px;width:4px;height:2.5px;background:#4f5f54"></div>
<div class="a" style="left:1792px;top:111px;width:3px;height:2.5px;background:#4f5f54"></div>
<div class="a" style="left:1796px;top:111px;width:7px;height:2.5px;background:#4f5f54"></div>
<div class="a" style="left:1804px;top:111px;width:9px;height:2.5px;background:#4f5f54"></div>
<div class="a" style="left:1814px;top:111px;width:2px;height:2.5px;background:#4f5f54"></div>
<div class="a" style="left:1817px;top:111px;width:4px;height:2.5px;background:#4f5f54"></div>
<div class="a" style="left:1822px;top:111px;width:4px;height:2.5px;background:#4f5f54"></div>
<div class="a" style="left:1770px;top:115px;width:1px;height:2.5px;background:#4f5f54"></div>
<div class="a" style="left:1773px;top:115px;width:4px;height:2.5px;background:#4f5f54"></div>
<div class="a" style="left:1778px;top:115px;width:6px;height:2.5px;background:#4f5f54"></div>
<div class="a" style="left:1785px;top:115px;width:3px;height:2.5px;background:#4f5f54"></div>
<div class="a" style="left:1789px;top:115px;width:2px;height:2.5px;background:#4f5f54"></div>
<div class="a" style="left:1792px;top:115px;width:5px;height:2.5px;background:#4f5f54"></div>
<div class="a" style="left:1798px;top:115px;width:6px;height:2.5px;background:#4f5f54"></div>
<div class="a" style="left:1805px;top:115px;width:3px;height:2.5px;background:#4f5f54"></div>
<div class="a" style="left:1809px;top:115px;width:4px;height:2.5px;background:#4f5f54"></div>
<div class="a" style="left:1814px;top:115px;width:5px;height:2.5px;background:#4f5f54"></div>
<div class="a" style="left:1770px;top:119px;width:1px;height:2.5px;background:#4f5f54"></div>
<div class="a" style="left:1773px;top:119px;width:8px;height:2.5px;background:#4f5f54"></div>
<div class="a" style="left:1782px;top:119px;width:4px;height:2.5px;background:#4f5f54"></div>
<div class="a" style="left:1787px;top:119px;width:7px;height:2.5px;background:#4f5f54"></div>
<div class="a" style="left:1770px;top:127px;width:1px;height:2.5px;background:#4f5f54"></div>
<div class="a" style="left:1773px;top:127px;width:10px;height:2.5px;background:#4a6d96"></div>
<div class="a" style="left:1784px;top:127px;width:5px;height:2.5px;background:#4f5f54"></div>
<div class="a" style="left:1790px;top:127px;width:8px;height:2.5px;background:#4f5f54"></div>
<div class="a" style="left:1799px;top:127px;width:9px;height:2.5px;background:#4f5f54"></div>
<div class="a" style="left:1809px;top:127px;width:2px;height:2.5px;background:#4f5f54"></div>
<div class="a" style="left:1812px;top:127px;width:4px;height:2.5px;background:#4f5f54"></div>
<div class="a" style="left:1817px;top:127px;width:3px;height:2.5px;background:#4f5f54"></div>
<div class="a" style="left:1821px;top:127px;width:6px;height:2.5px;background:#4f5f54"></div>
<div class="a" style="left:1828px;top:127px;width:8px;height:2.5px;background:#4f5f54"></div>
<div class="a" style="left:1770px;top:131px;width:1px;height:2.5px;background:#4f5f54"></div>
<div class="a" style="left:1773px;top:131px;width:6px;height:2.5px;background:#7a7756"></div>
<div class="a" style="left:1780px;top:131px;width:9px;height:2.5px;background:#7a7756"></div>
<div class="a" style="left:1790px;top:131px;width:3px;height:2.5px;background:#7a7756"></div>
<div class="a" style="left:1794px;top:131px;width:7px;height:2.5px;background:#7a7756"></div>
<div class="a" style="left:1802px;top:131px;width:8px;height:2.5px;background:#7a7756"></div>
<div class="a" style="left:1811px;top:131px;width:2px;height:2.5px;background:#7a7756"></div>
<div class="a" style="left:1814px;top:131px;width:3px;height:2.5px;background:#7a7756"></div>
<div class="a" style="left:1818px;top:131px;width:5px;height:2.5px;background:#7a7756"></div>
<div class="a" style="left:1824px;top:131px;width:9px;height:2.5px;background:#7a7756"></div>
<div class="a" style="left:1834px;top:131px;width:6px;height:2.5px;background:#7a7756"></div>
<div class="a" style="left:1841px;top:131px;width:3px;height:2.5px;background:#7a7756"></div>
<div class="a" style="left:1845px;top:131px;width:5px;height:2.5px;background:#7a7756"></div>
<div class="a" style="left:1769px;top:139px;width:6px;height:2.5px;background:#4a6d96"></div>
<div class="a" style="left:1776px;top:139px;width:5px;height:2.5px;background:#4a6d96"></div>
<div class="a" style="left:1782px;top:139px;width:20px;height:2.5px;background:#7fa39c"></div>
<div class="a" style="left:1802px;top:139px;width:1px;height:2.5px;background:#5c5e62"></div>
<div class="a" style="left:1803px;top:139px;width:1px;height:2.5px;background:#d95a6a"></div>
<div class="a" style="left:1805px;top:139px;width:7px;height:2.5px;background:#d95a6a"></div>
<div class="a" style="left:1813px;top:139px;width:10px;height:2.5px;background:#4a6d96"></div>
<div class="a" style="left:1824px;top:139px;width:10px;height:2.5px;background:#4a6d96"></div>
<div class="a" style="left:1835px;top:139px;width:10px;height:2.5px;background:#4a6d96"></div>
<div class="a" style="left:1846px;top:139px;width:1px;height:2.5px;background:#4a6d96"></div>
<div class="a" style="left:1773px;top:147px;width:3px;height:2.5px;background:#4f5f54"></div>
<div class="a" style="left:1773px;top:155px;width:9px;height:2.5px;background:#7a6554"></div>
<div class="a" style="left:1783px;top:155px;width:5px;height:2.5px;background:#7a6554"></div>
<div class="a" style="left:1789px;top:155px;width:1px;height:2.5px;background:#7fa39c"></div>
<div class="a" style="left:1791px;top:155px;width:10px;height:2.5px;background:#5c5e62"></div>
<div class="a" style="left:1801px;top:155px;width:1px;height:2.5px;background:#5c5e62"></div>
<div class="a" style="left:1773px;top:162px;width:2px;height:2.5px;background:#4f5f54"></div>
<div class="a" style="left:1774px;top:166px;width:7px;height:2.5px;background:#4f5f54"></div>
<div class="a" style="left:1782px;top:166px;width:1px;height:2.5px;background:#4f5f54"></div>
<div class="a" style="left:1784px;top:166px;width:3px;height:2.5px;background:#4f5f54"></div>
<div class="a" style="left:1788px;top:166px;width:8px;height:2.5px;background:#4f5f54"></div>
<div class="a" style="left:1797px;top:166px;width:2px;height:2.5px;background:#4f5f54"></div>
<div class="a" style="left:1800px;top:166px;width:20px;height:2.5px;background:#4f5f54"></div>
<div class="a" style="left:1774px;top:170px;width:7px;height:2.5px;background:#4f5f54"></div>
<div class="a" style="left:1782px;top:170px;width:10px;height:2.5px;background:#4f5f54"></div>
<div class="a" style="left:1793px;top:170px;width:1px;height:2.5px;background:#4f5f54"></div>
<div class="a" style="left:1795px;top:170px;width:8px;height:2.5px;background:#4f5f54"></div>
<div class="a" style="left:1804px;top:170px;width:2px;height:2.5px;background:#4f5f54"></div>
<div class="a" style="left:1807px;top:170px;width:4px;height:2.5px;background:#4f5f54"></div>
<div class="a" style="left:1812px;top:170px;width:4px;height:2.5px;background:#4f5f54"></div>
<div class="a" style="left:1817px;top:170px;width:6px;height:2.5px;background:#4f5f54"></div>
<div class="a" style="left:1773px;top:177px;width:9px;height:2.5px;background:#7a6554"></div>
<div class="a" style="left:1783px;top:177px;width:20px;height:2.5px;background:#4a6d96"></div>
<div class="a" style="left:1803px;top:177px;width:1px;height:2.5px;background:#5c5e62"></div>
<div class="a" style="left:1804px;top:177px;width:1px;height:2.5px;background:#7fa39c"></div>
<div class="a" style="left:1806px;top:177px;width:11px;height:2.5px;background:#5c5e62"></div>
<div class="a" style="left:1818px;top:177px;width:1px;height:2.5px;background:#5c5e62"></div>
<div class="a" style="left:1820px;top:177px;width:4px;height:2.5px;background:#7a6554"></div>
<div class="a" style="left:1824px;top:177px;width:1px;height:2.5px;background:#5c5e62"></div>
<div class="a" style="left:1825px;top:177px;width:10px;height:2.5px;background:#7d6082"></div>
<div class="a" style="left:1836px;top:177px;width:1px;height:2.5px;background:#5c5e62"></div>
<div class="a" style="left:1838px;top:177px;width:7px;height:2.5px;background:#d95a6a"></div>
<div class="a" style="left:1845px;top:177px;width:1px;height:2.5px;background:#5c5e62"></div>
<div class="a" style="left:1846px;top:177px;width:14px;height:2.5px;background:#5c5e62"></div>
<div class="a" style="left:1860px;top:177px;width:12px;height:2.5px;background:#5c5e62"></div>
<div class="a" style="left:1873px;top:177px;width:1px;height:2.5px;background:#5c5e62"></div>
<div class="a" style="left:1773px;top:185px;width:9px;height:2.5px;background:#7a7756"></div>
<div class="a" style="left:1773px;top:189px;width:6px;height:2.5px;background:#7a6554"></div>
<div class="a" style="left:1780px;top:189px;width:3px;height:2.5px;background:#d95a6a"></div>
<div class="a" style="left:1784px;top:189px;width:5px;height:2.5px;background:#4a6d96"></div>
<div class="a" style="left:1789px;top:189px;width:2px;height:2.5px;background:#5c5e62"></div>
<div class="a" style="left:1792px;top:189px;width:1px;height:2.5px;background:#5c5e62"></div>
<div class="a" style="left:1794px;top:189px;width:6px;height:2.5px;background:#7a6554"></div>
<div class="a" style="left:1801px;top:189px;width:10px;height:2.5px;background:#7d6082"></div>
<div class="a" style="left:1811px;top:189px;width:1px;height:2.5px;background:#5c5e62"></div>
<div class="a" style="left:1812px;top:189px;width:5px;height:2.5px;background:#d95a6a"></div>
<div class="a" style="left:1817px;top:189px;width:3px;height:2.5px;background:#5c5e62"></div>
<div class="a" style="left:1821px;top:189px;width:1px;height:2.5px;background:#5c5e62"></div>
<div class="a" style="left:1773px;top:197px;width:9px;height:2.5px;background:#7a7756"></div>
<div class="a" style="left:1773px;top:201px;width:6px;height:2.5px;background:#7a6554"></div>
<div class="a" style="left:1780px;top:201px;width:6px;height:2.5px;background:#5c5e62"></div>
<div class="a" style="left:1787px;top:201px;width:7px;height:2.5px;background:#4a6d96"></div>
<div class="a" style="left:1794px;top:201px;width:2px;height:2.5px;background:#5c5e62"></div>
<div class="a" style="left:1797px;top:201px;width:1px;height:2.5px;background:#5c5e62"></div>
<div class="a" style="left:1799px;top:201px;width:6px;height:2.5px;background:#7a6554"></div>
<div class="a" style="left:1806px;top:201px;width:10px;height:2.5px;background:#7d6082"></div>
<div class="a" style="left:1816px;top:201px;width:1px;height:2.5px;background:#5c5e62"></div>
<div class="a" style="left:1817px;top:201px;width:7px;height:2.5px;background:#d95a6a"></div>
<div class="a" style="left:1824px;top:201px;width:3px;height:2.5px;background:#5c5e62"></div>
<div class="a" style="left:1828px;top:201px;width:1px;height:2.5px;background:#5c5e62"></div>
<div class="a" style="left:1773px;top:209px;width:2px;height:2.5px;background:#4f5f54"></div>
<div class="a" style="left:1773px;top:214px;width:9px;height:2.5px;background:#7a7756"></div>
<div class="a" style="left:1773px;top:218px;width:6px;height:2.5px;background:#7a6554"></div>
<div class="a" style="left:1780px;top:218px;width:11px;height:2.5px;background:#d95a6a"></div>
<div class="a" style="left:1792px;top:218px;width:15px;height:2.5px;background:#4a6d96"></div>
<div class="a" style="left:1807px;top:218px;width:2px;height:2.5px;background:#5c5e62"></div>
<div class="a" style="left:1810px;top:218px;width:6px;height:2.5px;background:#7a6554"></div>
<div class="a" style="left:1817px;top:218px;width:11px;height:2.5px;background:#d95a6a"></div>
<div class="a" style="left:1829px;top:218px;width:1px;height:2.5px;background:#5c5e62"></div>
<div class="a" style="left:1777px;top:222px;width:6px;height:2.5px;background:#7a6554"></div>
<div class="a" style="left:1784px;top:222px;width:10px;height:2.5px;background:#7d6082"></div>
<div class="a" style="left:1794px;top:222px;width:1px;height:2.5px;background:#5c5e62"></div>
<div class="a" style="left:1795px;top:222px;width:15px;height:2.5px;background:#d95a6a"></div>
<div class="a" style="left:1810px;top:222px;width:3px;height:2.5px;background:#5c5e62"></div>
<div class="a" style="left:1773px;top:226px;width:1px;height:2.5px;background:#5c5e62"></div>
<div class="a" style="left:1773px;top:234px;width:2px;height:2.5px;background:#4f5f54"></div>
<div class="a" style="left:1773px;top:240px;width:9px;height:2.5px;background:#7a7756"></div>
<div class="a" style="left:1773px;top:244px;width:6px;height:2.5px;background:#7a6554"></div>
<div class="a" style="left:1780px;top:244px;width:12px;height:2.5px;background:#d95a6a"></div>
<div class="a" style="left:1793px;top:244px;width:16px;height:2.5px;background:#4a6d96"></div>
<div class="a" style="left:1809px;top:244px;width:2px;height:2.5px;background:#5c5e62"></div>
<div class="a" style="left:1812px;top:244px;width:6px;height:2.5px;background:#7a6554"></div>
<div class="a" style="left:1819px;top:244px;width:11px;height:2.5px;background:#d95a6a"></div>
<div class="a" style="left:1831px;top:244px;width:1px;height:2.5px;background:#5c5e62"></div>
<div class="a" style="left:1777px;top:248px;width:6px;height:2.5px;background:#7a6554"></div>
<div class="a" style="left:1784px;top:248px;width:10px;height:2.5px;background:#7d6082"></div>
<div class="a" style="left:1794px;top:248px;width:1px;height:2.5px;background:#5c5e62"></div>
<div class="a" style="left:1795px;top:248px;width:16px;height:2.5px;background:#d95a6a"></div>
<div class="a" style="left:1811px;top:248px;width:3px;height:2.5px;background:#5c5e62"></div>
<div class="a" style="left:1773px;top:252px;width:1px;height:2.5px;background:#5c5e62"></div>
<div class="a" style="left:1773px;top:259px;width:2px;height:2.5px;background:#4f5f54"></div>
<div class="a" style="left:1773px;top:265px;width:9px;height:2.5px;background:#7a7756"></div>
<div class="a" style="left:1773px;top:269px;width:6px;height:2.5px;background:#7a6554"></div>
<div class="a" style="left:1780px;top:269px;width:6px;height:2.5px;background:#d95a6a"></div>
<div class="a" style="left:1787px;top:269px;width:10px;height:2.5px;background:#4a6d96"></div>
<div class="a" style="left:1797px;top:269px;width:30px;height:2.5px;background:#5c5e62"></div>
<div class="a" style="left:1828px;top:269px;width:6px;height:2.5px;background:#7a6554"></div>
<div class="a" style="left:1835px;top:269px;width:11px;height:2.5px;background:#d95a6a"></div>
<div class="a" style="left:1847px;top:269px;width:1px;height:2.5px;background:#5c5e62"></div>
<div class="a" style="left:1777px;top:273px;width:6px;height:2.5px;background:#7a6554"></div>
<div class="a" style="left:1784px;top:273px;width:10px;height:2.5px;background:#7d6082"></div>
<div class="a" style="left:1794px;top:273px;width:1px;height:2.5px;background:#5c5e62"></div>
<div class="a" style="left:1795px;top:273px;width:10px;height:2.5px;background:#d95a6a"></div>
<div class="a" style="left:1805px;top:273px;width:25px;height:2.5px;background:#5c5e62"></div>
<div class="a" style="left:1773px;top:277px;width:1px;height:2.5px;background:#5c5e62"></div>
<div class="a" style="left:1773px;top:285px;width:2px;height:2.5px;background:#4f5f54"></div>
<div class="a" style="left:1773px;top:291px;width:9px;height:2.5px;background:#7a7756"></div>
<div class="a" style="left:1773px;top:295px;width:6px;height:2.5px;background:#7a6554"></div>
<div class="a" style="left:1780px;top:295px;width:12px;height:2.5px;background:#5c5e62"></div>
<div class="a" style="left:1793px;top:295px;width:14px;height:2.5px;background:#4a6d96"></div>
<div class="a" style="left:1807px;top:295px;width:30px;height:2.5px;background:#5c5e62"></div>
<div class="a" style="left:1838px;top:295px;width:6px;height:2.5px;background:#7a6554"></div>
<div class="a" style="left:1845px;top:295px;width:11px;height:2.5px;background:#d95a6a"></div>
<div class="a" style="left:1857px;top:295px;width:1px;height:2.5px;background:#5c5e62"></div>
<div class="a" style="left:1777px;top:299px;width:6px;height:2.5px;background:#7a6554"></div>
<div class="a" style="left:1784px;top:299px;width:10px;height:2.5px;background:#7d6082"></div>
<div class="a" style="left:1794px;top:299px;width:1px;height:2.5px;background:#5c5e62"></div>
<div class="a" style="left:1795px;top:299px;width:14px;height:2.5px;background:#d95a6a"></div>
<div class="a" style="left:1809px;top:299px;width:25px;height:2.5px;background:#5c5e62"></div>
<div class="a" style="left:1773px;top:303px;width:1px;height:2.5px;background:#5c5e62"></div>
<div class="a" style="left:1773px;top:311px;width:2px;height:2.5px;background:#4f5f54"></div>
<div class="a" style="left:1773px;top:317px;width:9px;height:2.5px;background:#7a7756"></div>
<div class="a" style="left:1773px;top:321px;width:6px;height:2.5px;background:#7a6554"></div>
<div class="a" style="left:1780px;top:321px;width:6px;height:2.5px;background:#d95a6a"></div>
<div class="a" style="left:1787px;top:321px;width:10px;height:2.5px;background:#4a6d96"></div>
<div class="a" style="left:1797px;top:321px;width:2px;height:2.5px;background:#5c5e62"></div>
<div class="a" style="left:1800px;top:321px;width:6px;height:2.5px;background:#7a6554"></div>
<div class="a" style="left:1807px;top:321px;width:11px;height:2.5px;background:#d95a6a"></div>
<div class="a" style="left:1819px;top:321px;width:1px;height:2.5px;background:#5c5e62"></div>
<div class="a" style="left:1777px;top:325px;width:6px;height:2.5px;background:#7a6554"></div>
<div class="a" style="left:1784px;top:325px;width:10px;height:2.5px;background:#7d6082"></div>
<div class="a" style="left:1794px;top:325px;width:1px;height:2.5px;background:#5c5e62"></div>
<div class="a" style="left:1795px;top:325px;width:10px;height:2.5px;background:#d95a6a"></div>
<div class="a" style="left:1805px;top:325px;width:3px;height:2.5px;background:#5c5e62"></div>
<div class="a" style="left:1773px;top:329px;width:1px;height:2.5px;background:#5c5e62"></div>
<div class="a" style="left:1773px;top:337px;width:9px;height:2.5px;background:#7a7756"></div>
<div class="a" style="left:1773px;top:341px;width:6px;height:2.5px;background:#7a6554"></div>
<div class="a" style="left:1780px;top:341px;width:2px;height:2.5px;background:#5c5e62"></div>
<div class="a" style="left:1783px;top:341px;width:12px;height:2.5px;background:#4a6d96"></div>
<div class="a" style="left:1795px;top:341px;width:2px;height:2.5px;background:#5c5e62"></div>
<div class="a" style="left:1798px;top:341px;width:1px;height:2.5px;background:#5c5e62"></div>
<div class="a" style="left:1800px;top:341px;width:6px;height:2.5px;background:#7a6554"></div>
<div class="a" style="left:1807px;top:341px;width:10px;height:2.5px;background:#7d6082"></div>
<div class="a" style="left:1817px;top:341px;width:14px;height:2.5px;background:#d95a6a"></div>
<div class="a" style="left:1831px;top:341px;width:3px;height:2.5px;background:#5c5e62"></div>
<div class="a" style="left:1835px;top:341px;width:1px;height:2.5px;background:#5c5e62"></div>
<div class="a" style="left:1773px;top:349px;width:9px;height:2.5px;background:#7a7756"></div>
<div class="a" style="left:1773px;top:353px;width:6px;height:2.5px;background:#7a6554"></div>
<div class="a" style="left:1780px;top:353px;width:6px;height:2.5px;background:#5c5e62"></div>
<div class="a" style="left:1787px;top:353px;width:7px;height:2.5px;background:#4a6d96"></div>
<div class="a" style="left:1794px;top:353px;width:2px;height:2.5px;background:#5c5e62"></div>
<div class="a" style="left:1797px;top:353px;width:1px;height:2.5px;background:#5c5e62"></div>
<div class="a" style="left:1799px;top:353px;width:6px;height:2.5px;background:#7a6554"></div>
<div class="a" style="left:1806px;top:353px;width:10px;height:2.5px;background:#7d6082"></div>
<div class="a" style="left:1816px;top:353px;width:12px;height:2.5px;background:#d95a6a"></div>
<div class="a" style="left:1828px;top:353px;width:3px;height:2.5px;background:#5c5e62"></div>
<div class="a" style="left:1832px;top:353px;width:1px;height:2.5px;background:#5c5e62"></div>
<div class="a" style="left:1769px;top:358px;width:1px;height:2.5px;background:#5c5e62"></div>
<div class="a" style="left:80px;top:41px;width:396px;height:786px;background:#2b2d30;border:1px solid #43454a;border-radius:8px;box-shadow:0 4px 14px rgba(0,0,0,0.35)"></div>
<div class="mi" style="left:112px;top:46px;color:#585b61"><span class="u1">U</span>ndo</div>
<div class="ms" style="left:260px;width:197px;top:46px;color:#505358">Ctrl+Z</div>
<svg class="a" style="left:91px;top:52px" width="16" height="16" viewBox="0 0 16 16"><path d="M4 7 Q9 2.5 14 8.5" fill="none" stroke="#5f6268" stroke-width="2"/><path d="M1.5 3.5 L2.5 9.5 L8 8 Z" fill="#5f6268"/></svg>
<div class="mi" style="left:112px;top:72px;color:#585b61"><span class="u1">R</span>edo</div>
<div class="ms" style="left:260px;width:197px;top:72px;color:#505358">Ctrl+Shift+Z</div>
<svg class="a" style="left:91px;top:78px" width="16" height="16" viewBox="0 0 16 16"><path d="M12 7 Q7 2.5 2 8.5" fill="none" stroke="#5f6268" stroke-width="2"/><path d="M14.5 3.5 L13.5 9.5 L8 8 Z" fill="#5f6268"/></svg>
<div class="a" style="left:81px;top:99px;width:394px;height:1px;background:#43454a"></div>
<div class="mi" style="left:112px;top:101px;color:#dfe1e5">Cu<span class="u1">t</span></div>
<div class="ms" style="left:260px;width:197px;top:101px;color:#7c7f86">Ctrl+X</div>
<svg class="a" style="left:91px;top:106px" width="16" height="16" viewBox="0 0 16 16"><g fill="none" stroke="#89a3e0" stroke-width="1.4"><circle cx="3" cy="11.5" r="2"/><circle cx="3" cy="4.5" r="2"/><path d="M4.7 10 L14 2 M4.7 6 L14 14"/></g></svg>
<div class="mi" style="left:112px;top:127px;color:#dfe1e5"><span class="u1">C</span>opy</div>
<div class="ms" style="left:260px;width:197px;top:127px;color:#7c7f86">Ctrl+C</div>
<svg class="a" style="left:91px;top:132px" width="16" height="16" viewBox="0 0 16 16"><g fill="none" stroke="#b3d08c" stroke-width="1.3"><path d="M1.5 11.5 V1.5 H10"/><rect x="4.2" y="4.2" width="9.6" height="10.6" rx="0.8"/></g></svg>
<div class="mi" style="left:112px;top:153px;color:#dfe1e5">Copy Path/Reference...</div>
<div class="a" style="left:84px;top:180px;width:388px;height:24px;background:#2e436e;border-radius:4px"></div>
<div class="mi" style="left:112px;top:179px;color:#dfe1e5">Paste</div>
<svg class="a" style="left:457px;top:188px" width="6" height="8" viewBox="0 0 6 8"><path d="M1 1 L4 4 L1 7" fill="none" stroke="#93acd6" stroke-width="1.2"/></svg>
<div class="mi" style="left:112px;top:205px;color:#dfe1e5"><span class="u1">D</span>elete</div>
<div class="ms" style="left:260px;width:197px;top:205px;color:#7c7f86">Delete</div>
<div class="a" style="left:81px;top:232px;width:394px;height:1px;background:#43454a"></div>
<div class="mi" style="left:112px;top:234px;color:#585b61">Search In Selection</div>
<div class="ms" style="left:260px;width:197px;top:234px;color:#505358">Ctrl+Alt+E</div>
<div class="mi" style="left:112px;top:260px;color:#dfe1e5"><span class="u1">F</span>ind</div>
<svg class="a" style="left:457px;top:269px" width="6" height="8" viewBox="0 0 6 8"><path d="M1 1 L4 4 L1 7" fill="none" stroke="#5aa9b8" stroke-width="1.2"/></svg>
<div class="mi" style="left:112px;top:286px;color:#dfe1e5">Find Usages</div>
<svg class="a" style="left:457px;top:295px" width="6" height="8" viewBox="0 0 6 8"><path d="M1 1 L4 4 L1 7" fill="none" stroke="#5aa9b8" stroke-width="1.2"/></svg>
<div class="a" style="left:81px;top:313px;width:394px;height:1px;background:#43454a"></div>
<div class="mi" style="left:112px;top:315px;color:#dfe1e5">Column Selection <span class="u1">M</span>ode</div>
<div class="ms" style="left:260px;width:197px;top:315px;color:#7c7f86">Alt+Shift+Insert</div>
<div class="mi" style="left:112px;top:341px;color:#dfe1e5">Select <span class="u1">A</span>ll</div>
<div class="ms" style="left:260px;width:197px;top:341px;color:#7c7f86">Ctrl+A</div>
<div class="mi" style="left:112px;top:367px;color:#dfe1e5">Add Carets to Ends of Selected Lines</div>
<div class="ms" style="left:260px;width:197px;top:367px;color:#7c7f86">Alt+Shift+G</div>
<div class="mi" style="left:112px;top:393px;color:#dfe1e5">Extend Selection</div>
<div class="ms" style="left:260px;width:197px;top:393px;color:#7c7f86">Ctrl+W</div>
<div class="mi" style="left:112px;top:419px;color:#dfe1e5">Shrink Selection</div>
<div class="ms" style="left:260px;width:197px;top:419px;color:#7c7f86">Ctrl+Shift+W</div>
<div class="a" style="left:81px;top:446px;width:394px;height:1px;background:#43454a"></div>
<div class="mi" style="left:112px;top:448px;color:#dfe1e5">Toggle Case</div>
<div class="ms" style="left:260px;width:197px;top:448px;color:#7c7f86">Ctrl+Shift+U</div>
<div class="mi" style="left:112px;top:474px;color:#dfe1e5">Join Lines</div>
<div class="ms" style="left:260px;width:197px;top:474px;color:#7c7f86">Ctrl+Shift+J</div>
<div class="mi" style="left:112px;top:500px;color:#dfe1e5"><span class="u1">D</span>uplicate Line</div>
<div class="ms" style="left:260px;width:197px;top:500px;color:#7c7f86">Ctrl+D</div>
<div class="mi" style="left:112px;top:526px;color:#585b61">Fill Paragraph</div>
<div class="mi" style="left:112px;top:552px;color:#dfe1e5">Sort Lines</div>
<div class="mi" style="left:112px;top:578px;color:#dfe1e5">Reverse Lines</div>
<div class="mi" style="left:112px;top:604px;color:#dfe1e5">Transpose</div>
<div class="a" style="left:81px;top:631px;width:394px;height:1px;background:#43454a"></div>
<div class="mi" style="left:112px;top:633px;color:#585b61">Indent Selection</div>
<div class="ms" style="left:260px;width:197px;top:633px;color:#505358">Tab</div>
<div class="mi" style="left:112px;top:659px;color:#dfe1e5">Unindent Line or Selection</div>
<div class="ms" style="left:260px;width:197px;top:659px;color:#7c7f86">Shift+Tab</div>
<div class="mi" style="left:112px;top:685px;color:#dfe1e5">Convert Indents</div>
<svg class="a" style="left:457px;top:694px" width="6" height="8" viewBox="0 0 6 8"><path d="M1 1 L4 4 L1 7" fill="none" stroke="#5aa9b8" stroke-width="1.2"/></svg>
<div class="a" style="left:81px;top:712px;width:394px;height:1px;background:#43454a"></div>
<div class="mi" style="left:112px;top:714px;color:#dfe1e5">Macro<span class="u1">s</span></div>
<svg class="a" style="left:457px;top:723px" width="6" height="8" viewBox="0 0 6 8"><path d="M1 1 L4 4 L1 7" fill="none" stroke="#5aa9b8" stroke-width="1.2"/></svg>
<div class="mi" style="left:112px;top:740px;color:#dfe1e5">Boo<span class="u1">k</span>marks</div>
<svg class="a" style="left:457px;top:749px" width="6" height="8" viewBox="0 0 6 8"><path d="M1 1 L4 4 L1 7" fill="none" stroke="#5aa9b8" stroke-width="1.2"/></svg>
<div class="a" style="left:81px;top:767px;width:394px;height:1px;background:#43454a"></div>
<div class="mi" style="left:112px;top:769px;color:#585b61">Encode XML/HTML Special Characters</div>
<div class="mi" style="left:112px;top:795px;color:#dfe1e5">Edit as Table...</div>
<svg class="a" style="left:91px;top:800px" width="16" height="16" viewBox="0 0 16 16"><g fill="none" stroke="#5fc9b5" stroke-width="1.5"><rect x="1.75" y="2.75" width="12.5" height="10.5"/><path d="M1.75 8 H14.25 M8 2.75 V13.25"/></g></svg>
<div class="a" style="left:472px;top:177px;width:310px;height:89px;background:#2b2d30;border:1px solid #43454a;border-radius:8px;box-shadow:0 4px 14px rgba(0,0,0,0.35)"></div>
<div class="mi" style="left:504px;top:182px;color:#dfe1e5"><span class="u1">P</span>aste</div>
<div class="ms" style="left:600px;width:162px;top:182px">Ctrl+V</div>
<svg class="a" style="left:483px;top:187px" width="16" height="16" viewBox="0 0 16 16"><g fill="none" stroke="#e8c46a" stroke-width="1.4"><rect x="2.7" y="3.7" width="10.6" height="11.3" rx="0.5"/><path d="M5.5 3.7 V2.2 H7 Q8 0.8 9 2.2 H10.5 V4.5 H5.5 Z" fill="#e8c46a"/></g></svg>
<div class="mi" style="left:504px;top:208px;color:#dfe1e5">Past<span class="u1">e</span> from History...</div>
<div class="ms" style="left:600px;width:162px;top:208px">Ctrl+Shift+V</div>
<div class="mi" style="left:504px;top:234px;color:#dfe1e5">Paste as P<span class="u1">l</span>ain Text</div>
<div class="ms" style="left:600px;width:162px;top:234px">Ctrl+Alt+Shift+V</div></div></body></html>
